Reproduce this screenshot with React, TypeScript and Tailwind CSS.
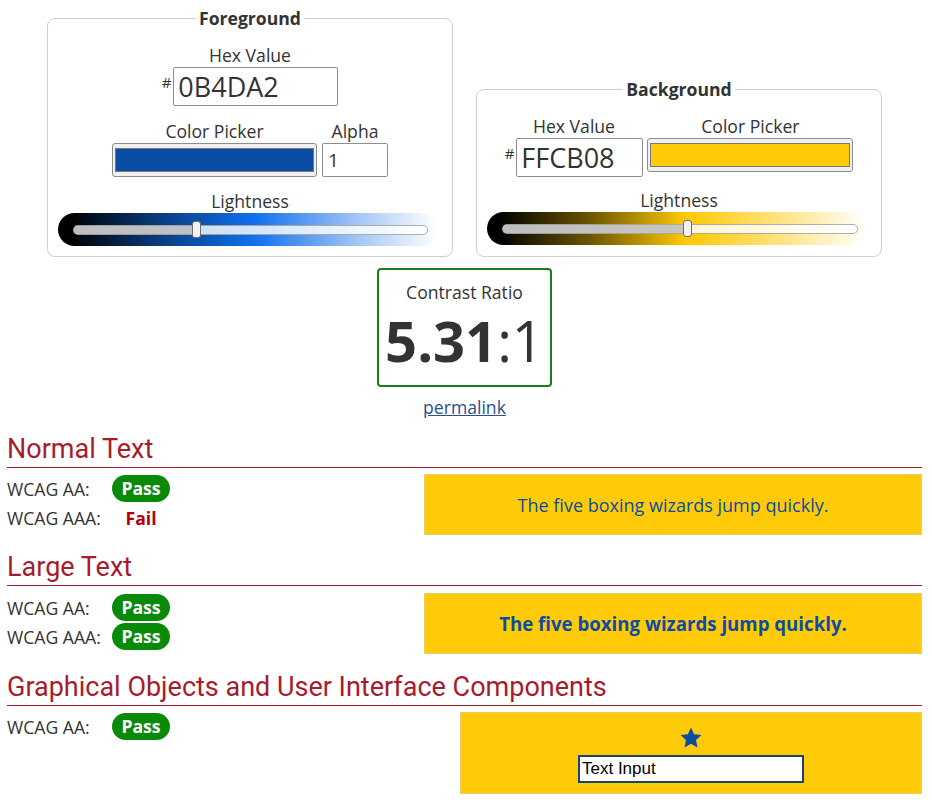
import React from 'react';

function Slider({ trackClass, fillWidth, thumbLeft, className }: { trackClass: string; fillWidth: string; thumbLeft: string; className: string }) {
  return (
    <div className={`relative h-[33px] rounded-full ${trackClass} ${className}`}>
      {/* track */}
      <div className="absolute left-[15px] right-[9px] top-[12px] h-[10px] rounded-full border border-[rgba(110,110,110,0.55)] bg-[rgba(255,255,255,0.82)] overflow-hidden">
        <div className={`h-full bg-[rgba(185,185,185,0.8)] ${fillWidth}`} />
      </div>
      {/* thumb */}
      <div className={`absolute top-[8px] h-[17px] w-[9px] rounded-[3px] border border-[#6f6f6f] bg-[#f3f3f3] ${thumbLeft}`} />
    </div>
  );
}

function Badge() {
  return (
    <span className="inline-block w-[58px] h-[27px] rounded-full bg-[#098a09] text-white font-bold text-center leading-[27px]">
      Pass
    </span>
  );
}

function Row({ label, pass = true }: { label: string; pass?: boolean }) {
  return (
    <div className="flex items-center h-[29px]">
      <span className="w-[105px]">{label}</span>
      {pass ? (
        <Badge />
      ) : (
        <span className="inline-block w-[58px] text-center font-bold text-[#b3000a]">Fail</span>
      )}
    </div>
  );
}

function Heading({ children, className }: { children: React.ReactNode; className: string }) {
  return (
    <h2 className={`font-['Roboto',sans-serif] text-[27px] leading-[31px] text-[#a71c2c] pb-[2px] border-b border-b-[#a71c2c] ${className}`}>
      {children}
    </h2>
  );
}

export default function App() {
  return (
    <div className="min-h-screen bg-white text-[#333] font-['Open_Sans',sans-serif] text-[17.6px] leading-[24px] pl-[7px] pr-[10px] pt-[6px]">
      {/* Colour pickers */}
      <div className="flex items-end">
        <fieldset className="ml-[40px] w-[406px] border border-[#cfcfcf] rounded-[8px] pb-[10px]">
          <legend className="mx-auto px-[3px] font-bold">Foreground</legend>
          <div className="pt-[13px] flex flex-col items-center">
            <span>Hex Value</span>
            <div className="flex items-start">
              <span className="text-[15px] leading-none mt-[8px] mr-[2px]">#</span>
              <input
                value="0B4DA2"
                readOnly
                className="w-[165px] h-[39px] border border-[#8d8d8d] rounded-[2px] pl-[4px] text-[27px] text-[#333] outline-none"
              />
            </div>
            <div className="mt-[13px] flex items-start gap-[5px]">
              <div className="flex flex-col items-center">
                <span>Color Picker</span>
                <div className="w-[205px] h-[34px] border border-[#8d8d8d] rounded-[3px] bg-[#f0f0f0] px-[2px] py-[4px]">
                  <div className="h-full border border-[#777] bg-[#0B4DA2]" />
                </div>
              </div>
              <div className="flex flex-col items-center">
                <span>Alpha</span>
                <input
                  value="1"
                  readOnly
                  className="w-[66px] h-[34px] border border-[#8d8d8d] rounded-[2px] pl-[5px] text-[19px] text-[#333] outline-none"
                />
              </div>
            </div>
            <span className="mt-[12px]">Lightness</span>
            <Slider
              className="self-start ml-[10px] w-[379px]"
              trackClass="bg-[linear-gradient(to_right,#000_3%,#0a3f86_28%,#1071ee_52%,#9fc2f5_78%,#fff_100%)]"
              fillWidth="w-[121px]"
              thumbLeft="left-[134px]"
            />
          </div>
        </fieldset>

        <fieldset className="ml-[23px] w-[406px] border border-[#cfcfcf] rounded-[8px] pb-[11px]">
          <legend className="mx-auto px-[3px] font-bold">Background</legend>
          <div className="pt-[13px] flex flex-col items-center">
            <div className="flex items-start gap-[4px]">
              <div className="flex flex-col items-center">
                <span>Hex Value</span>
                <div className="flex items-start">
                  <span className="text-[15px] leading-none mt-[8px] mr-[2px]">#</span>
                  <input
                    value="FFCB08"
                    readOnly
                    className="w-[127px] h-[39px] border border-[#8d8d8d] rounded-[2px] pl-[4px] text-[27px] text-[#333] outline-none"
                  />
                </div>
              </div>
              <div className="flex flex-col items-center">
                <span>Color Picker</span>
                <div className="w-[206px] h-[34px] border border-[#8d8d8d] rounded-[3px] bg-[#f0f0f0] px-[2px] py-[4px]">
                  <div className="h-full border border-[#777] bg-[#FFCB08]" />
                </div>
              </div>
            </div>
            <span className="mt-[11px]">Lightness</span>
            <Slider
              className="self-start ml-[10px] w-[380px]"
              trackClass="bg-[linear-gradient(to_right,#000_3%,#6b5500_27%,#ffc800_52%,#ffe486_78%,#fff_100%)]"
              fillWidth="w-[183px]"
              thumbLeft="left-[196px]"
            />
          </div>
        </fieldset>
      </div>

      {/* Contrast ratio */}
      <div className="mt-[11px] flex flex-col items-center">
        <div className="w-[175px] border-2 border-[#1c7d1c] rounded-[4px] pt-[10px] pb-[11px] flex flex-col items-center">
          <span>Contrast Ratio</span>
          <div className="mt-[3px] text-[56px] leading-[67px]">
            <span className="font-bold">5.31</span>
            <span>:1</span>
          </div>
        </div>
        <a href="#" className="mt-[8px] text-[#2d4f8e] underline">
          permalink
        </a>
      </div>

      {/* Normal text */}
      <Heading className="mt-[15px]">Normal Text</Heading>
      <div className="mt-[6px] flex justify-between items-start">
        <div>
          <Row label="WCAG AA:" />
          <Row label="WCAG AAA:" pass={false} />
        </div>
        <div className="w-[498px] h-[61px] bg-[#FFCB08] border border-[#e9cf6b] flex items-center justify-center text-[#0B4DA2] text-[18px]">
          The five boxing wizards jump quickly.
        </div>
      </div>

      {/* Large text */}
      <Heading className="mt-[17px]">Large Text</Heading>
      <div className="mt-[7px] flex justify-between items-start">
        <div>
          <Row label="WCAG AA:" />
          <Row label="WCAG AAA:" />
        </div>
        <div className="w-[498px] h-[61px] bg-[#FFCB08] border border-[#e9cf6b] flex items-center justify-center text-[#0B4DA2] font-bold text-[18.67px]">
          The five boxing wizards jump quickly.
        </div>
      </div>

      {/* Graphical objects */}
      <Heading className="mt-[18px]">Graphical Objects and User Interface Components</Heading>
      <div className="mt-[6px] flex justify-between items-start">
        <div>
          <Row label="WCAG AA:" />
        </div>
        <div className="w-[462px] h-[82px] bg-[#FFCB08] border border-[#e9cf6b] flex flex-col items-center pt-[13px]">
          <svg className="w-[24px] h-[24px]" viewBox="0 0 24 24" fill="#0B4DA2">
            <polygon points="12,1.5 15.1,8.3 22.5,9.1 17,14.1 18.5,21.5 12,17.8 5.5,21.5 7,14.1 1.5,9.1 8.9,8.3" />
          </svg>
          <input
            value="Text Input"
            readOnly
            className="mt-[5px] w-[226px] h-[28px] border-2 border-[#17456e] bg-white pl-[2px] font-['Liberation_Sans',Arial,sans-serif] text-[17px] text-black outline-none"
          />
        </div>
      </div>
    </div>
  );
}
